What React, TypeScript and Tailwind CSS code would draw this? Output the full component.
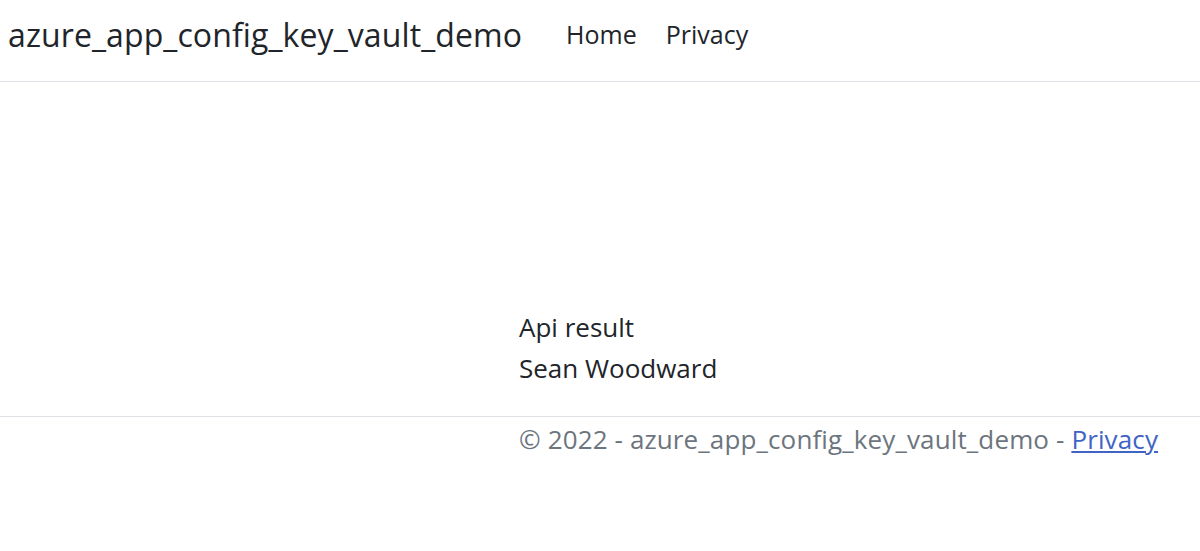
import React from 'react';

const font = { fontFamily: '"Open Sans", "Noto Sans", sans-serif' };

export default function App() {
  return (
    <div className="min-h-screen bg-white text-[#212529]" style={font}>
      {/* navbar */}
      <header className="h-[82px] border-b border-[#dee2e6] flex items-center pl-[8px] pb-[12px]">
        <span className="text-[32px] leading-none tracking-[0.1px] mr-[44px]">azure_app_config_key_vault_demo</span>
        <nav className="flex items-center gap-[29px] text-[25px] leading-none">
          <a href="#" className="text-[#212529]">Home</a>
          <a href="#" className="text-[#212529]">Privacy</a>
        </nav>
      </header>

      {/* main */}
      <main className="pl-[519px] pt-[225px] pb-[27px] text-[26px] leading-[41px]">
        <div>Api result</div>
        <div>Sean Woodward</div>
      </main>

      {/* footer */}
      <footer className="border-t border-[#dee2e6] pl-[519px] text-[26px] leading-[44px] tracking-[0.13px] text-[#6c757d]">
        © 2022 - azure_app_config_key_vault_demo -{' '}
        <a href="#" className="text-[#3f64c4] underline">Privacy</a>
      </footer>
    </div>
  );
}
